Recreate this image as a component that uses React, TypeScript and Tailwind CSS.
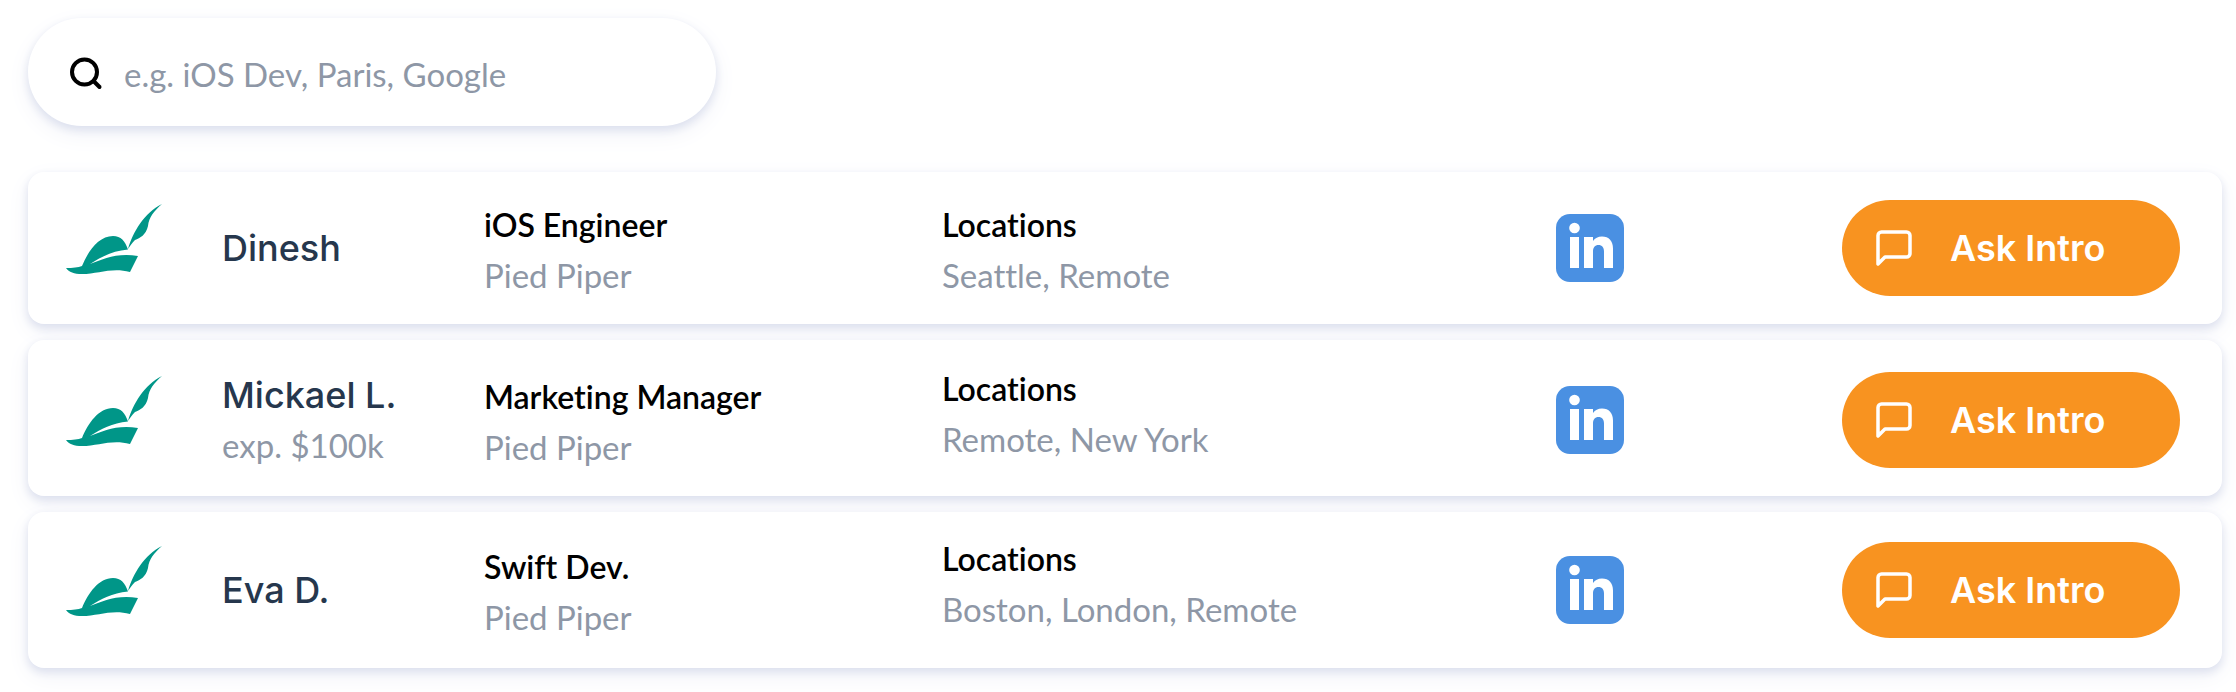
import React, { useState, ChangeEvent } from 'react';

interface Candidate {
  id: number;
  name: string;
  salary?: string;
  role: string;
  company: string;
  locations: string[];
  rowClass: string;
  locationsClass: string;
}

const candidates: Candidate[] = [
  {
    id: 1,
    name: 'Dinesh',
    role: 'iOS Engineer',
    company: 'Pied Piper',
    locations: ['Seattle', 'Remote'],
    rowClass: 'py-5',
    locationsClass: 'pt-1',
  },
  {
    id: 2,
    name: 'Mickael L.',
    salary: 'exp. $100k',
    role: 'Marketing Manager',
    company: 'Pied Piper',
    locations: ['Remote', 'New York'],
    rowClass: 'pt-6 pb-5',
    locationsClass: 'self-start',
  },
  {
    id: 3,
    name: 'Eva D.',
    role: 'Swift Dev.',
    company: 'Pied Piper',
    locations: ['Boston', 'London', 'Remote'],
    rowClass: 'py-[22px]',
    locationsClass: 'self-start',
  },
];

const HatLogo: React.FC = () => (
  <svg viewBox="0 -4 96 96" className="size-24" fill="#009688" aria-hidden="true">
    <path d="M0 64 C7 64 12 63.500 16 62 C22 47 33 32 47 32 C55 32 59 37 62 45.500 C46 47 35 53 24 60 C37 55 51 48.500 72 52 L64 68 C46 63 32 70 16 70 C8 70 3 68 0 64 Z" />
    <path d="M62 45 C67 28 78 9 96 0 C88 7 83 13 82 22 C80 31 74 34 69 36 C66 39 64 42 62 45 Z" />
  </svg>
);

const LinkedInLogo: React.FC = () => (
  <svg viewBox="0 0 68 68" className="size-[68px]" aria-hidden="true">
    <rect width="68" height="68" rx="14" fill="#4a90e2" />
    <g fill="#fff">
      <circle cx="18.500" cy="14" r="5.300" />
      <rect x="14" y="23" width="9" height="31" />
      <path d="M28 23 h9 v4 c2-3 5-4.500 9-4.500 c7 0 11 4.500 11 12 V54 h-9 V37.500 c0-4-2-6.500-5.500-6.500 S37 33.500 37 37.500 V54 h-9 Z" />
    </g>
  </svg>
);

const MessageIcon: React.FC = () => (
  <svg viewBox="0 0 36 36" className="size-9" fill="none" stroke="currentColor" strokeWidth="3.500" strokeLinejoin="round" aria-hidden="true">
    <path d="M34 23.500 a3.500 3.500 0 0 1-3.500 3.500 H9 L2 34 V5.500 A3.500 3.500 0 0 1 5.500 2 h25 A3.500 3.500 0 0 1 34 5.500 Z" />
  </svg>
);

interface DetailProps {
  title: string;
  text: string;
  className: string;
}

const Detail: React.FC<DetailProps> = ({ title, text, className }) => (
  <div className={className}>
    <h3 className="text-[32px] leading-[50px] font-semibold text-black">{title}</h3>
    <p className="text-[33px] leading-[50px] text-[#8e97a6]">{text}</p>
  </div>
);

const CandidateRow: React.FC<{ candidate: Candidate }> = ({ candidate }) => (
  <li
    className={`grid auto-rows-[112px] grid-cols-[156fr_262fr_458fr_614fr_286fr_338px] items-center rounded-2xl bg-white pr-[42px] pl-[38px] shadow-[0_4px_8px_#dce0ee,0_8px_24px_#f1f2f8] ${candidate.rowClass}`}
  >
    <HatLogo />

    <div>
      <h2 className="font-[Inter] text-[36px] leading-[50px] font-medium text-[#26374d]">{candidate.name}</h2>
      {candidate.salary && <p className="text-[33px] leading-[50px] text-[#8e97a6]">{candidate.salary}</p>}
    </div>

    <Detail title={candidate.role} text={candidate.company} className="pt-1" />
    <Detail title="Locations" text={candidate.locations.join(', ')} className={candidate.locationsClass} />

    <a href="#linkedin" aria-label={`${candidate.name} on LinkedIn`} className="justify-self-start">
      <LinkedInLogo />
    </a>

    <button type="button" className="flex h-24 items-center gap-[38px] rounded-full bg-[#f89320] pl-[34px] text-white">
      <MessageIcon />
      <span className="font-[Inter] text-[36px] leading-[50px] font-semibold">Ask Intro</span>
    </button>
  </li>
);

const App: React.FC = () => {
  const [query, setQuery] = useState('');

  const handleChange = (e: ChangeEvent<HTMLInputElement>) => setQuery(e.target.value);

  return (
    <main className="bg-white pt-[18px] pr-[14px] pb-6 pl-7 font-[Lato,sans-serif] [font-variant-ligatures:none]">
      {/* Search */}
      <label className="flex h-[108px] w-full max-w-[688px] items-center gap-5 rounded-full bg-white px-10 pt-1 shadow-[0_4px_8px_#dce0ee,0_8px_24px_#f1f2f8]">
        <svg viewBox="0 0 36 36" className="size-9 shrink-0" fill="none" stroke="#000" strokeWidth="4" strokeLinecap="round" aria-hidden="true">
          <circle cx="16.500" cy="16" r="12.500" />
          <path d="M25.500 25 L31.500 31" />
        </svg>
        <input
          type="search"
          value={query}
          onChange={handleChange}
          aria-label="Search candidates"
          placeholder="e.g. iOS Dev, Paris, Google"
          className="min-w-0 flex-1 bg-transparent text-[33px] leading-[50px] placeholder:text-[#8e97a6] focus:outline-none"
        />
      </label>

      {/* Results */}
      <ul className="mt-[46px] flex flex-col gap-4">
        {candidates.map((candidate) => (
          <CandidateRow key={candidate.id} candidate={candidate} />
        ))}
      </ul>
    </main>
  );
};

export default App;
